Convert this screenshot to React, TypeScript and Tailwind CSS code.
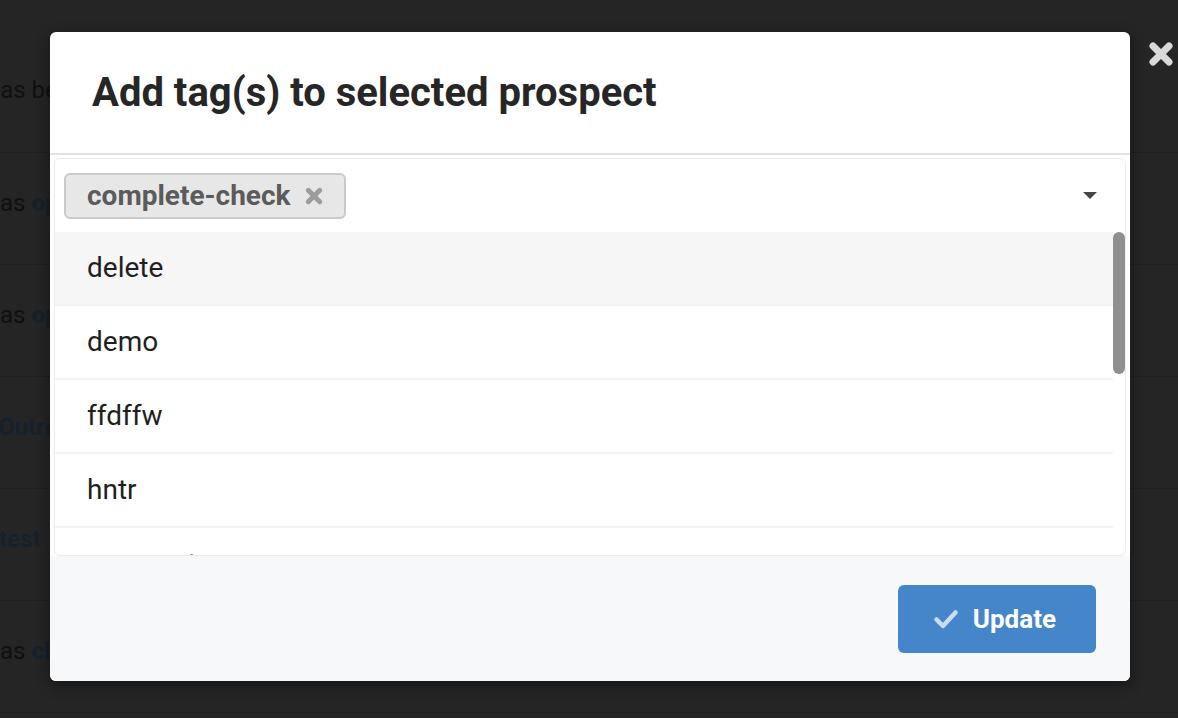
import { useState } from "react";

const tags = ["delete", "demo", "ffdffw", "hntr", "prospect"];

const bgRows = [
  { pre: "has been", link: "", shift: "-ml-[13px]" },
  { pre: "was ", link: "opened", shift: "-ml-[18px]" },
  { pre: "was ", link: "opened", shift: "-ml-[18px]" },
  { pre: "", link: "Outreach", shift: "-ml-[2px]" },
  { pre: "", link: "test", shift: "-ml-[1px]" },
  { pre: "was ", link: "clicked", shift: "-ml-[18px]" },
];

const TimesIcon = ({ className }: { className?: string }) => (
  <svg viewBox="0 0 28 28" className={className} fill="none">
    <path d="M6 6 L22 22 M22 6 L6 22" stroke="currentColor" strokeWidth="7" strokeLinecap="round" />
  </svg>
);

const CheckIcon = ({ className }: { className?: string }) => (
  <svg viewBox="0 0 24 20" className={className} fill="none">
    <path d="M2.5 10.5 L9 17 L21.5 3.5" stroke="currentColor" strokeWidth="4.5" strokeLinecap="round" strokeLinejoin="round" />
  </svg>
);

export default function App() {
  const [active, setActive] = useState(0);
  const [selected, setSelected] = useState(["complete-check"]);

  return (
    <div className="relative w-[1178px] h-[718px] overflow-hidden bg-[#252525] font-['Roboto',sans-serif]">
      {/* page behind the modal */}
      <div>
        {bgRows.map((r, i) => (
          <div
            key={i}
            className={`flex items-center pb-[12px] border-b border-[#1f1f1f] text-[24px] text-[#101010] ${
              i === 0 ? "h-[153px] pt-[40px]" : "h-[112px]"
            }`}
          >
            <div className={`whitespace-pre ${r.shift}`}>
              {r.pre && <span>{r.pre}</span>}
              {r.link && <span className="font-bold text-[#16212c]">{r.link}</span>}
            </div>
          </div>
        ))}
      </div>

      {/* overlay */}
      <div className="absolute inset-0 flex justify-center pt-[32px] pl-[2px]">
        <div className="w-[1080px] h-[649px] flex flex-col bg-white rounded-[6px] shadow-[0_4px_14px_rgba(0,0,0,0.45)]">
          <div className="pl-[42px] pt-[37px] pb-[36px] border-b-2 border-[#e2e2e2]">
            <h3 className="text-[40px] leading-[48px] font-bold text-[#262626]">
              Add tag(s) to selected prospect
            </h3>
          </div>

          <div className="px-[4px] pt-[3px]">
            <div className="border border-[#ececec] rounded-[6px]">
              <div className="h-[73px] flex items-center pl-[9px] pr-[28px]">
                <div className="flex-1 flex gap-2">
                  {selected.map((t) => (
                    <div
                      key={t}
                      className="h-[46px] flex items-center gap-[13px] pl-[21px] pr-[20px] bg-[#e7e7e7] border-2 border-[#c9c9c9] rounded-[6px]"
                    >
                      <span className="text-[28px] font-bold text-[#5b5b5b]">{t}</span>
                      <button onClick={() => setSelected(selected.filter((s) => s !== t))}>
                        <TimesIcon className="w-[20px] h-[20px] text-[#9c9c9c]" />
                      </button>
                    </div>
                  ))}
                </div>
                <div className="w-0 h-0 border-l-[7px] border-r-[7px] border-t-[7px] border-l-transparent border-r-transparent border-t-[#454545]" />
              </div>

              <div className="h-[323px] flex overflow-hidden rounded-b-[6px]">
                <div className="flex-1">
                  {tags.map((t, i) => (
                    <div
                      key={t}
                      onMouseEnter={() => setActive(i)}
                      className={`h-[74px] flex items-center pl-[32px] border-b-2 border-[#f4f4f4] text-[28px] text-[#1f1f1f] ${
                        active === i ? "bg-[#f6f6f6]" : "bg-white"
                      }`}
                    >
                      {t}
                    </div>
                  ))}
                </div>
                <div className="w-[12px]">
                  <div className="h-[142px] bg-[#8f8f8f] rounded-full" />
                </div>
              </div>
            </div>
          </div>

          <div className="flex-1 flex justify-end items-start pt-[29px] pr-[34px] bg-[#f7f8fa] rounded-b-[6px]">
            <button className="h-[68px] flex items-center gap-[15px] pl-[36px] pr-[40px] bg-[#4585ca] rounded-[6px] text-white">
              <CheckIcon className="w-[24px] h-[20px] text-[#cadcf1]" />
              <span className="text-[26px] font-bold">Update</span>
            </button>
          </div>
        </div>

        <button className="absolute top-[40px] right-[3px]">
          <TimesIcon className="w-[28px] h-[28px] text-[#d9d9d9]" />
        </button>
      </div>
    </div>
  );
}
